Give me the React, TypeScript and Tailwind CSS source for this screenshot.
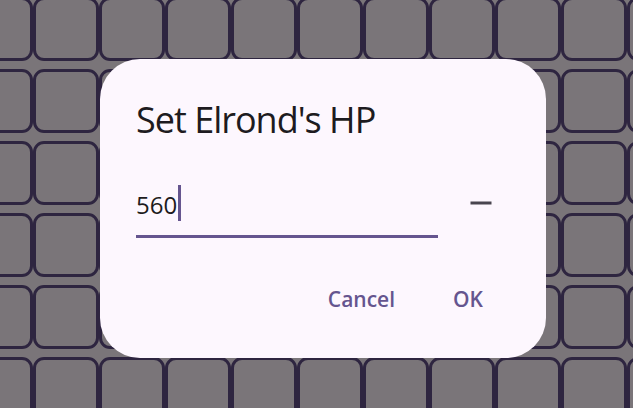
import React from "react";

const ROWS = 6;
const COLS = 11;

export default function App() {
  return (
    <div className="relative w-[633px] h-[408px] overflow-hidden bg-[#7a7579]" style={{ fontFamily: '"Open Sans", "Noto Sans", sans-serif' }}>
      <div className="flex flex-col gap-[8px] -mt-[3px] -ml-[33px]">
        {Array.from({ length: ROWS }).map((_, r) => (
          <div key={r} className="flex">
            {Array.from({ length: COLS }).map((_, c) => (
              <div key={c} className="shrink-0 w-[66px] h-[64px] rounded-[11px] border-[3px] border-[#2e2540]" />
            ))}
          </div>
        ))}
      </div>

      <div className="absolute left-[100px] top-[59px] w-[446px] h-[299px] rounded-[40px] bg-[#fdf7fe] pl-[36px] pr-[36px] pt-[43px] flex flex-col">
        <div className="text-[36px] leading-[36px] text-[#1d1b20] tracking-[-1px] whitespace-nowrap">Set Elrond's HP</div>
        <div className="flex items-start mt-[42px]">
          <div className="w-[302px] h-[58px] border-b-[3px] border-[#65558f] flex items-center pb-[9px]">
            <span className="text-[24px] leading-[24px] text-[#1d1b20] mt-[3px]">560</span>
            <span className="inline-block w-[3px] h-[36px] bg-[#65558f] ml-[1px]" />
          </div>
          <div className="ml-[25px] w-[36px] h-[36px] mt-[5px] flex items-center justify-center">
            <svg width="36" height="36" viewBox="0 0 24 24" fill="#49454f">
              <path d="M19 13H5v-2h14v2z" />
            </svg>
          </div>
        </div>
        <div className="flex justify-end items-center mt-[51px] pr-[27px] text-[21px] leading-[21px] font-semibold text-[#65558f]">
          <span>Cancel</span>
          <span className="ml-[58px]">OK</span>
        </div>
      </div>
    </div>
  );
}
